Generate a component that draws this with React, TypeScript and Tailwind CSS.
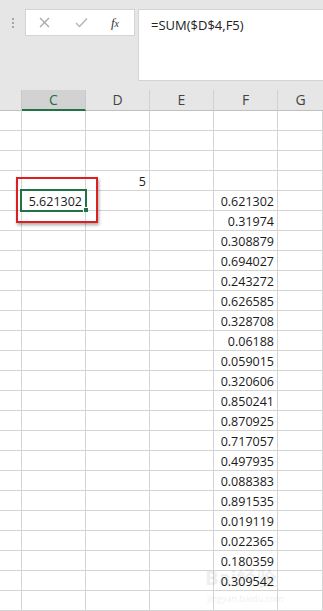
import React from "react";

const values = [
  "0.621302",
  "0.31974",
  "0.308879",
  "0.694027",
  "0.243272",
  "0.626585",
  "0.328708",
  "0.06188",
  "0.059015",
  "0.320606",
  "0.850241",
  "0.870925",
  "0.717057",
  "0.497935",
  "0.088383",
  "0.891535",
  "0.019119",
  "0.022365",
  "0.180359",
  "0.309542",
];

// rows shown below the header: 4 empty-ish rows, then the data, then one blank
const rows = Array.from({ length: 25 }, (_, i) => {
  const f = i >= 4 && i < 24 ? values[i - 4] : "";
  const c = i === 4 ? "5.621302" : "";
  const d = i === 3 ? "5" : "";
  return { c, d, f };
});

const grid = "grid grid-cols-[22px_64px_64px_64px_64px_1fr]";
const cell =
  "h-[20px] border-r border-b border-[#d4d4d4] text-right pr-[3px] leading-[21px] text-[12.5px] text-[#1a1a1a]";

export default function App() {
  return (
    <div
      className="w-[323px] h-[611px] overflow-hidden bg-white relative"
      style={{ fontFamily: '"Open Sans", "Noto Sans", sans-serif' }}
    >
      {/* formula bar */}
      <div className="h-[90px] bg-[#e6e6e6] flex items-start pt-[9px]">
        <div className="w-[25px] h-[27px] flex flex-col items-center justify-center gap-[2px] pl-[1px]">
          <span className="w-[2px] h-[2px] bg-[#a6a6a6]" />
          <span className="w-[2px] h-[2px] bg-[#a6a6a6]" />
          <span className="w-[2px] h-[2px] bg-[#a6a6a6]" />
        </div>
        <div className="w-[110px] h-[27px] bg-white border border-[#d4d4d4] flex items-center">
          <div className="w-[37px] flex justify-center">
            <svg width="11" height="11" viewBox="0 0 11 11">
              <path d="M1 1L10 10M10 1L1 10" stroke="#a8a8a8" strokeWidth="1.3" />
            </svg>
          </div>
          <div className="w-[37px] flex justify-center">
            <svg width="13" height="11" viewBox="0 0 13 11">
              <path d="M1 6L4.5 9.5L12 1.5" stroke="#b5b5b5" strokeWidth="1.4" fill="none" />
            </svg>
          </div>
          <div
            className="w-[30px] flex justify-center italic text-[13px] text-[#333]"
            style={{ fontFamily: '"Liberation Serif", serif' }}
          >
            f<span className="text-[10px] mt-[3px]">x</span>
          </div>
        </div>
        <div className="ml-[3px] flex-1 h-[72px] bg-white border-y border-l border-[#d4d4d4] pl-[12px] pt-[6px] text-[13px] text-[#222] leading-[18px]">
          =SUM($D$4,F5)
        </div>
      </div>

      {/* column header */}
      <div className={`${grid} h-[21px] bg-[#e6e6e6] border-b border-[#bfbfbf] text-[14px] text-[#444] leading-[19px]`}>
        <div className="border-r border-[#c8c8c8]" />
        <div className="bg-[#d2d2d2] border-r border-[#c8c8c8] border-b-2 border-b-[#217346] text-center text-[#217346]">
          C
        </div>
        <div className="border-r border-[#d0d0d0] text-center">D</div>
        <div className="border-r border-[#d0d0d0] text-center">E</div>
        <div className="border-r border-[#d0d0d0] text-center">F</div>
        <div className="text-center">G</div>
      </div>

      {/* cells */}
      <div>
        {rows.map((r, i) => (
          <div key={i} className={grid}>
            <div className={cell} />
            <div className={cell}>{r.c}</div>
            <div className={cell}>{r.d}</div>
            <div className={cell} />
            <div className={cell}>{r.f}</div>
            <div className={cell} />
          </div>
        ))}
      </div>

      {/* active cell */}
      <div className="absolute left-[20px] top-[189px] w-[67px] h-[23px] border-2 border-[#217346] pointer-events-none" />
      <div className="absolute left-[83px] top-[207px] w-[5px] h-[5px] bg-[#217346] border-l border-t border-white" />

      {/* red highlight */}
      <div className="absolute left-[16px] top-[177px] w-[82px] h-[46px] border-[2.5px] border-[#dd1f1f] shadow-[1px_2px_3px_rgba(0,0,0,0.35)]" />

      {/* watermark */}
      <div className="absolute left-[205px] top-[568px] text-[20px] font-bold text-[#000] opacity-[0.06] leading-none">
        Bai经验
      </div>
      <div className="absolute left-[207px] top-[594px] text-[9px] text-[#000] opacity-[0.06] leading-none">
        jingyan.baidu.com
      </div>
    </div>
  );
}
